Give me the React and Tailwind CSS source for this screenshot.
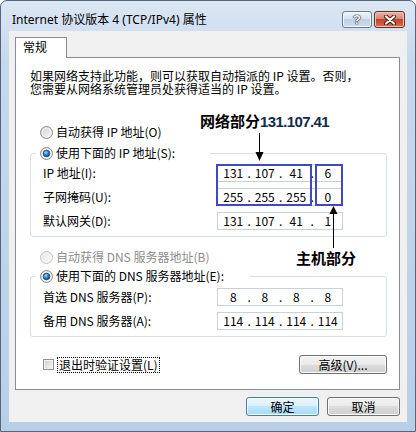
import React from "react";

function Radio({ checked, disabled, id }) {
  return (
    <svg width="13" height="13" viewBox="0 0 13 13" className="shrink-0">
      <defs>
        <linearGradient id={`rg${id}`} x1="0" y1="0" x2="1" y2="1">
          <stop offset="0" stopColor={disabled ? "#e6e6e6" : "#cdcdcd"} />
          <stop offset="1" stopColor="#fbfbfb" />
        </linearGradient>
        <radialGradient id={`rb${id}`} cx="0.4" cy="0.35" r="0.75">
          <stop offset="0" stopColor="#a8e0ff" />
          <stop offset="0.45" stopColor="#2a86d2" />
          <stop offset="1" stopColor="#0c3a70" />
        </radialGradient>
      </defs>
      <circle cx="6.5" cy="6.5" r="6" fill={`url(#rg${id})`} stroke={disabled ? "#c2c2c2" : "#8a8a8a"} />
      <circle cx="6.5" cy="6.5" r="4.5" fill="none" stroke="#f4f4f4" strokeWidth="1" />
      {checked && <circle cx="6.5" cy="6.5" r="3.3" fill={`url(#rb${id})`} stroke="#1c3f66" strokeWidth="0.8" />}
    </svg>
  );
}

function IpBox({ parts }) {
  return (
    <div className="flex h-[18px] w-[126px] shrink-0 items-center overflow-hidden border border-[#c9d0d8] bg-white pl-[1px] text-[12px] leading-[16px]">
      {parts.map((p, i) => (
        <React.Fragment key={i}>
          <span className="w-[28.5px] shrink-0 text-center">{p}</span>
          {i < 3 && <span className="w-[3px] shrink-0 text-center">.</span>}
        </React.Fragment>
      ))}
    </div>
  );
}

function Row({ label, parts }) {
  return (
    <div className="flex h-[18px] items-center">
      <div className="w-[174px] leading-[16px]">{label}</div>
      <IpBox parts={parts} />
    </div>
  );
}

function Btn({ children, def, className }) {
  return (
    <div
      className={`flex h-[19px] items-center justify-center rounded-[3px] border text-[12px] leading-[16px] shadow-[inset_0_0_0_1px_#fbfbfb] ${
        def
          ? "border-[#3c7fb1] bg-[linear-gradient(#eaf6fd,#d9f0fc_50%,#bee6fd_50%,#a7d9f5)]"
          : "border-[#707070] bg-[linear-gradient(#f2f2f2,#ebebeb_50%,#dddddd_50%,#cfcfcf)]"
      } ${className}`}
    >
      {children}
    </div>
  );
}

export default function App() {
  return (
    <div className="relative h-[432px] w-[416px] overflow-hidden bg-white font-['Noto_Sans_CJK_SC','Noto_Sans',sans-serif] text-[12px] text-black">
      <div className="flex h-full w-full flex-col rounded-t-[7px] border border-[#55657a] bg-[linear-gradient(#dce7f4,#c6d8ec_60px,#b9cfe8)]">
        {/* title bar */}
        <div className="flex h-[30px] shrink-0 items-start">
          <div className="ml-[11px] mt-[11px] whitespace-nowrap font-['Noto_Sans','Noto_Sans_CJK_SC',sans-serif] text-[12px] leading-[16px] text-black">
            Internet 协议版本 4 (TCP/IPv4) 属性
          </div>
          <div className="ml-auto mr-[10px] mt-[10px] flex gap-[2px]">
            <div className="flex h-[17px] w-[30px] items-center justify-center rounded-[3px] border border-[#6b7a90] bg-[linear-gradient(#eef3f9,#d6e2f0_45%,#bfd1e7_50%,#cddcee)] shadow-[inset_0_0_0_1px_#f4f8fc]">
              <span className="font-['Liberation_Sans',sans-serif] text-[13px] font-bold leading-[13px] text-[#f4f4f4] [text-shadow:0_0_1px_#222,0_0_1px_#222,0_0_1px_#222]">?</span>
            </div>
            <div className="flex h-[17px] w-[31px] items-center justify-center rounded-[3px] border border-[#6d2a20] bg-[linear-gradient(#eab5a8,#d88673_45%,#c2432e_50%,#d56f52)] shadow-[inset_0_0_0_1px_#f0c4b8]">
              <svg width="14" height="10" viewBox="0 0 14 10">
                <path d="M3 1.5 L11 8.5 M11 1.5 L3 8.5" stroke="#4a1710" strokeWidth="4" strokeLinecap="round" />
                <path d="M3 1.5 L11 8.5 M11 1.5 L3 8.5" stroke="#ffffff" strokeWidth="2.2" strokeLinecap="round" />
              </svg>
            </div>
          </div>
        </div>

        {/* client area */}
        <div className="mx-[8px] mb-[9px] flex flex-1 flex-col bg-[#f0f0f0] pl-[6px] pt-[6px]">
          {/* tab */}
          <div className="relative z-10 -mb-px flex h-[21px] w-[52px] items-start border border-b-0 border-[#898c95] bg-white pl-[7px] pt-[1px] leading-[16px]">
            常规
          </div>
          {/* panel */}
          <div className="flex h-[333px] w-[385px] flex-col border border-[#898c95] bg-white">
            <div className="pl-[14px] pt-[11px]">
              <div className="h-[13px] leading-[13px]">如果网络支持此功能，则可以获取自动指派的 IP 设置。否则，</div>
              <div className="h-[13px] leading-[13px]">您需要从网络系统管理员处获得适当的 IP 设置。</div>
            </div>

            <div className="mt-[29px] flex h-[16px] items-center gap-[3px] pl-[24px] leading-[16px]">
              <Radio id="a" />
              <span>自动获得 IP 地址(O)</span>
            </div>

            <fieldset className="ml-[14px] mt-[5px] w-[357px] rounded-[3px] border border-[#d5dfe5] pb-[6px]">
              <legend className="ml-[5px] w-[174px] pl-[4px]">
                <div className="flex h-[16px] items-center gap-[3px] leading-[16px]">
                  <Radio id="b" checked />
                  <span>使用下面的 IP 地址(S):</span>
                </div>
              </legend>
              <div className="mt-[3px] flex flex-col gap-[6px] pl-[12px]">
                <Row label="IP 地址(I):" parts={["131", "107", "41", "6"]} />
                <Row label="子网掩码(U):" parts={["255", "255", "255", "0"]} />
                <Row label="默认网关(D):" parts={["131", "107", "41", "1"]} />
              </div>
            </fieldset>

            <div className="mt-[12px] flex h-[16px] items-center gap-[3px] pl-[24px] leading-[16px] text-[#8d8d8d]">
              <Radio id="c" disabled />
              <span>自动获得 DNS 服务器地址(B)</span>
            </div>

            <fieldset className="ml-[14px] mt-[3px] w-[357px] rounded-[3px] border border-[#d5dfe5] pb-[6px]">
              <legend className="ml-[5px] w-[214px] pl-[4px]">
                <div className="flex h-[16px] items-center gap-[3px] leading-[16px]">
                  <Radio id="d" checked />
                  <span>使用下面的 DNS 服务器地址(E):</span>
                </div>
              </legend>
              <div className="mt-[4px] flex flex-col gap-[6px] pl-[12px]">
                <Row label="首选 DNS 服务器(P):" parts={["8", "8", "8", "8"]} />
                <Row label="备用 DNS 服务器(A):" parts={["114", "114", "114", "114"]} />
              </div>
            </fieldset>

            <div className="mt-[18px] flex h-[19px] items-center pl-[27px] pr-[12px]">
              <div className="h-[11px] w-[11px] shrink-0 border border-[#8e8f8f] bg-[linear-gradient(135deg,#cfcfcf,#f6f6f6)] shadow-[inset_0_0_0_1px_#f2f2f2]" />
              <div className="ml-[3px] border border-dotted border-black px-[1px] leading-[14px]">退出时验证设置(L)</div>
              <Btn className="ml-auto w-[88px]">高级(V)...</Btn>
            </div>
          </div>

          {/* bottom buttons */}
          <div className="mt-[7px] flex w-[385px] justify-end gap-[8px]">
            <Btn def className="w-[73px]">确定</Btn>
            <Btn className="w-[73px]">取消</Btn>
          </div>
        </div>
      </div>

      {/* annotations */}
      <div className="absolute left-[200px] top-[112px] whitespace-nowrap text-[15px] font-bold leading-[18px]">
        网络部分<span className="font-['Liberation_Sans',sans-serif] text-[15px] tracking-[-0.6px] text-[#132b4c]">131.107.41</span>
      </div>
      <div className="absolute left-[296px] top-[249px] whitespace-nowrap text-[15px] font-bold leading-[18px]">
        主机部分
      </div>
      <div className="absolute left-[216px] top-[164px] h-[42px] w-[96px] border-2 border-[#4149c0]" />
      <div className="absolute left-[315px] top-[164px] h-[42px] w-[28px] border-2 border-[#4149c0]" />
      <svg className="pointer-events-none absolute left-0 top-0" width="416" height="432" viewBox="0 0 416 432">
        <line x1="259.5" y1="133" x2="259.5" y2="154" stroke="#000" strokeWidth="1" />
        <polygon points="255.5,152 263.5,152 259.5,161" fill="#000" />
        <line x1="333.5" y1="212" x2="333.5" y2="248" stroke="#000" strokeWidth="1" />
        <polygon points="329.5,214 337.5,214 333.5,206" fill="#000" />
      </svg>
    </div>
  );
}
